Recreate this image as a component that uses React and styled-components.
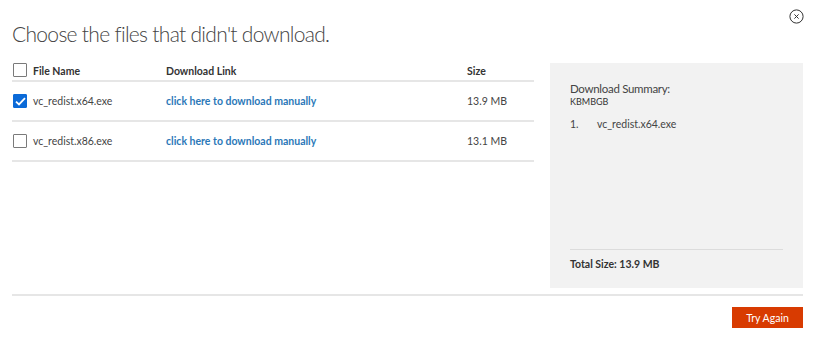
import React from 'react';
import styled, { createGlobalStyle } from 'styled-components';

const GlobalStyle = createGlobalStyle`
  html, body {
    margin: 0;
    padding: 0;
    background: #ffffff;
  }
  body {
    font-family: "Segoe UI", Lato, "Open Sans", sans-serif;
    color: #333333;
  }
`;

const font = `"Segoe UI", Lato, "Open Sans", sans-serif`;

const Page = styled.div`
  width: 820px;
  height: 337px;
  box-sizing: border-box;
  padding: 8px 17px 0 12px;
  display: flex;
  flex-direction: column;
`;

const CloseRow = styled.div`
  display: flex;
  justify-content: flex-end;
  margin-right: -1px;
  height: 16px;
`;

const CloseButton = styled.button`
  width: 16px;
  height: 16px;
  padding: 0;
  border: none;
  background: none;
  display: flex;
  align-items: center;
  justify-content: center;
  cursor: pointer;
`;

const Title = styled.h1`
  margin: -3px 0 0 0;
  font-family: ${font};
  font-weight: 300;
  font-size: 21px;
  letter-spacing: -0.7px;
  line-height: 26px;
  color: #444444;
`;

const Main = styled.div`
  display: flex;
  align-items: flex-start;
  gap: 16px;
  margin-top: 16px;
`;

const Table = styled.div`
  width: 522px;
  display: flex;
  flex-direction: column;
`;

const Row = styled.div`
  display: grid;
  grid-template-columns: 20px 133px 301px 1fr;
  align-items: center;
  height: ${p => (p.$header ? '17px' : '38px')};
  border-bottom: 2px solid #e6e6e6;
  padding-left: 1px;
`;

const HeaderCell = styled.div`
  font-family: ${font};
  font-weight: 700;
  font-size: 10.5px;
  color: #333333;
  margin-top: -2px;
`;

const Cell = styled.div`
  font-family: ${font};
  font-size: 10.5px;
  color: #444444;
`;

const LinkCell = styled.a`
  font-family: ${font};
  font-weight: 700;
  font-size: 10.5px;
  color: #2b78b8;
  text-decoration: none;
`;

const Box = styled.span`
  box-sizing: border-box;
  width: 14px;
  height: 14px;
  border: 1.5px solid ${p => (p.$checked ? '#0b6ad8' : '#7a7a7a')};
  background: ${p => (p.$checked ? '#0b6ad8' : '#ffffff')};
  border-radius: 1px;
  display: flex;
  align-items: center;
  justify-content: center;
  margin-top: ${p => (p.$header ? '-3px' : '0')};
`;

const Panel = styled.aside`
  width: 253px;
  height: 225px;
  box-sizing: border-box;
  background: #f2f2f2;
  padding: 18px 20px 18px 20px;
  display: flex;
  flex-direction: column;
`;

const SummaryTitle = styled.div`
  font-family: ${font};
  font-size: 11.5px;
  line-height: 15px;
  color: #444444;
  letter-spacing: -0.3px;
`;

const Kb = styled.div`
  font-family: ${font};
  font-size: 9px;
  line-height: 11px;
  color: #333333;
`;

const SummaryList = styled.ol`
  list-style: none;
  margin: 11px 0 0 0;
  padding: 0;
`;

const SummaryItem = styled.li`
  display: grid;
  grid-template-columns: 27px 1fr;
  font-family: ${font};
  font-size: 10.5px;
  color: #444444;
`;

const PanelFooter = styled.div`
  margin-top: auto;
  border-top: 1px solid #dcdcdc;
  padding-top: 8px;
  font-family: ${font};
  font-weight: 700;
  font-size: 10.5px;
  color: #333333;
`;

const Divider = styled.hr`
  margin: 6px 0 0 0;
  border: none;
  height: 2px;
  background: #e6e6e6;
`;

const Footer = styled.div`
  display: flex;
  justify-content: flex-end;
  margin-top: 11px;
`;

const PrimaryButton = styled.button`
  width: 71px;
  height: 21px;
  border: none;
  background: #d83b01;
  color: #ffffff;
  font-family: ${font};
  font-size: 10.5px;
  padding: 0;
  cursor: pointer;
`;

const Check = () => (
  <svg width="11" height="9" viewBox="0 0 11 9">
    <path d="M1 4.6 L4 7.4 L10 1.2" fill="none" stroke="#ffffff" strokeWidth="1.8" />
  </svg>
);

const CloseIcon = () => (
  <svg width="15" height="15" viewBox="0 0 15 15">
    <circle cx="7.5" cy="7.5" r="6.6" fill="none" stroke="#333333" strokeWidth="1" />
    <path d="M5.4 5.4 L9.6 9.6 M9.6 5.4 L5.4 9.6" stroke="#333333" strokeWidth="1" />
  </svg>
);

const files = [
  { name: 'vc_redist.x64.exe', size: '13.9 MB', checked: true },
  { name: 'vc_redist.x86.exe', size: '13.1 MB', checked: false },
];

export default function App() {
  return (
    <>
      <GlobalStyle />
      <Page>
        <CloseRow>
          <CloseButton aria-label="Close">
            <CloseIcon />
          </CloseButton>
        </CloseRow>
        <Title>Choose the files that didn't download.</Title>
        <Main>
          <Table>
            <Row $header>
              <Box $header />
              <HeaderCell>File Name</HeaderCell>
              <HeaderCell>Download Link</HeaderCell>
              <HeaderCell>Size</HeaderCell>
            </Row>
            {files.map(f => (
              <Row key={f.name}>
                <Box $checked={f.checked}>{f.checked && <Check />}</Box>
                <Cell>{f.name}</Cell>
                <LinkCell href="#">click here to download manually</LinkCell>
                <Cell>{f.size}</Cell>
              </Row>
            ))}
          </Table>
          <Panel>
            <SummaryTitle>Download Summary:</SummaryTitle>
            <Kb>KBMBGB</Kb>
            <SummaryList>
              <SummaryItem>
                <span>1.</span>
                <span>vc_redist.x64.exe</span>
              </SummaryItem>
            </SummaryList>
            <PanelFooter>Total Size: 13.9 MB</PanelFooter>
          </Panel>
        </Main>
        <Divider />
        <Footer>
          <PrimaryButton>Try Again</PrimaryButton>
        </Footer>
      </Page>
    </>
  );
}
